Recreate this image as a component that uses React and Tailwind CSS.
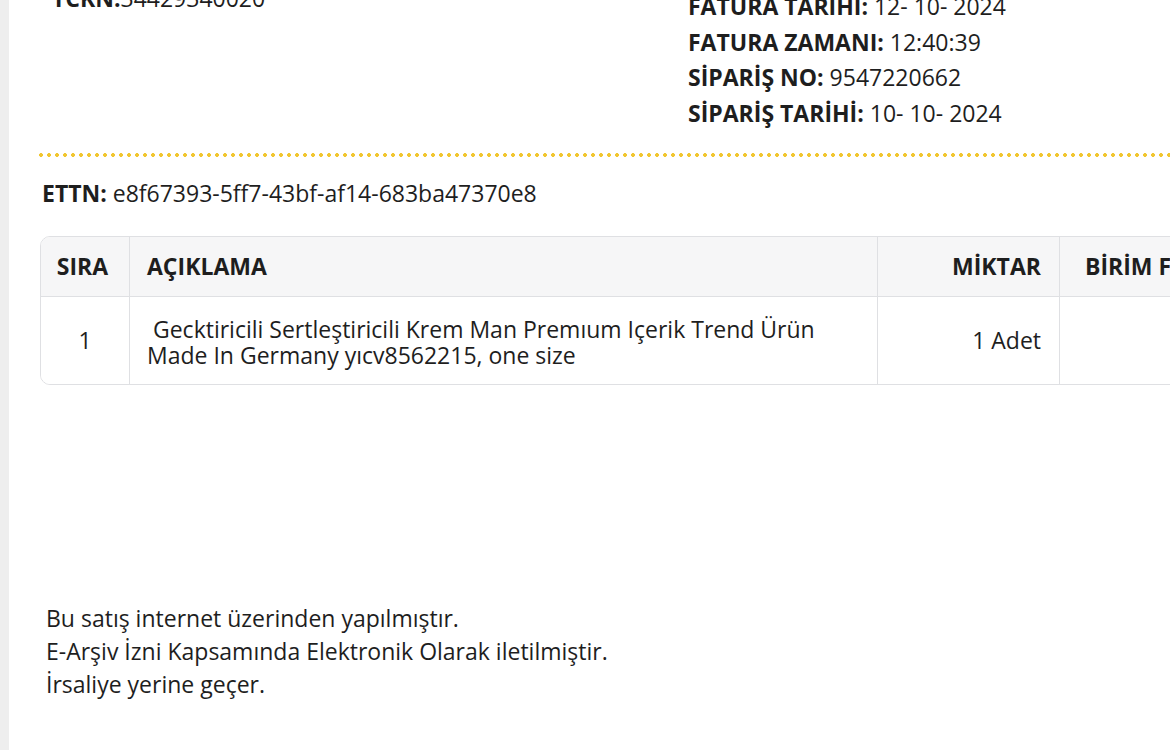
export default function App() {
  const font = { fontFamily: "'Open Sans', Lato, sans-serif" };
  return (
    <div className="w-[1170px] h-[750px] bg-white flex overflow-hidden text-[#1e1e1e]" style={font}>
      <div className="w-[9px] shrink-0 bg-[#eeeeee]" />
      <div className="flex-1 min-w-0 overflow-hidden flex flex-col">
        {/* header */}
        <div className="flex items-start h-[140px] mt-[-11px] shrink-0">
          <div className="w-[679px] shrink-0 pl-[43px] mt-[-9px] text-[23px] leading-[36px]">
            <span className="font-bold">TCKN:</span>34429340020
          </div>
          <div className="text-[23px] leading-[35.5px] whitespace-nowrap">
            <div><span className="font-bold">FATURA TARİHİ:</span> 12- 10- 2024</div>
            <div><span className="font-bold">FATURA ZAMANI:</span> 12:40:39</div>
            <div><span className="font-bold">SİPARİŞ NO:</span> 9547220662</div>
            <div><span className="font-bold">SİPARİŞ TARİHİ:</span> 10- 10- 2024</div>
          </div>
        </div>
        {/* dotted line */}
        <div className="mt-[24px] ml-[28px] h-[4px] w-[1200px] shrink-0 bg-[radial-gradient(circle,#f1c630_1.6px,transparent_2.2px)] bg-[length:8px_4px] bg-repeat-x" />
        {/* ETTN */}
        <div className="mt-[21px] ml-[33px] text-[23px] leading-[30px] whitespace-nowrap shrink-0">
          <span className="font-bold">ETTN:</span> e8f67393-5ff7-43bf-af14-683ba47370e8
        </div>
        {/* table */}
        <div className="mt-[28px] ml-[31px] w-[1300px] shrink-0 border border-[#dfe0e3] rounded-[10px] overflow-hidden">
          <div className="grid grid-cols-[88px_748px_182px_1fr] bg-[#f6f6f7] h-[60px] items-stretch text-[23px] font-bold border-b border-[#dfe0e3]">
            <div className="flex items-center justify-center pr-[5px]">SIRA</div>
            <div className="flex items-center pl-[17px] border-l border-[#dfe0e3]">AÇIKLAMA</div>
            <div className="flex items-center justify-end pr-[18px] border-l border-[#dfe0e3]">MİKTAR</div>
            <div className="flex items-center pl-[25px] border-l border-[#dfe0e3]">BİRİM FİYAT</div>
          </div>
          <div className="grid grid-cols-[88px_748px_182px_1fr] bg-white h-[87px] text-[23px]">
            <div className="flex items-center justify-center">1</div>
            <div className="flex items-center pl-[17px] pt-[2px] border-l border-[#dfe0e3] leading-[26px]">
              <div className="whitespace-pre">{" Gecktiricili Sertleştiricili Krem Man Premıum Içerik Trend Ürün\nMade In Germany yıcv8562215, one size"}</div>
            </div>
            <div className="flex items-center justify-end pr-[18px] border-l border-[#dfe0e3]">1 Adet</div>
            <div className="border-l border-[#dfe0e3]" />
          </div>
        </div>
        {/* footer */}
        <div className="mt-[217px] ml-[37px] text-[23px] leading-[33px] whitespace-nowrap shrink-0">
          <div>Bu satış internet üzerinden yapılmıştır.</div>
          <div>E-Arşiv İzni Kapsamında Elektronik Olarak iletilmiştir.</div>
          <div>İrsaliye yerine geçer.</div>
        </div>
      </div>
    </div>
  );
}
